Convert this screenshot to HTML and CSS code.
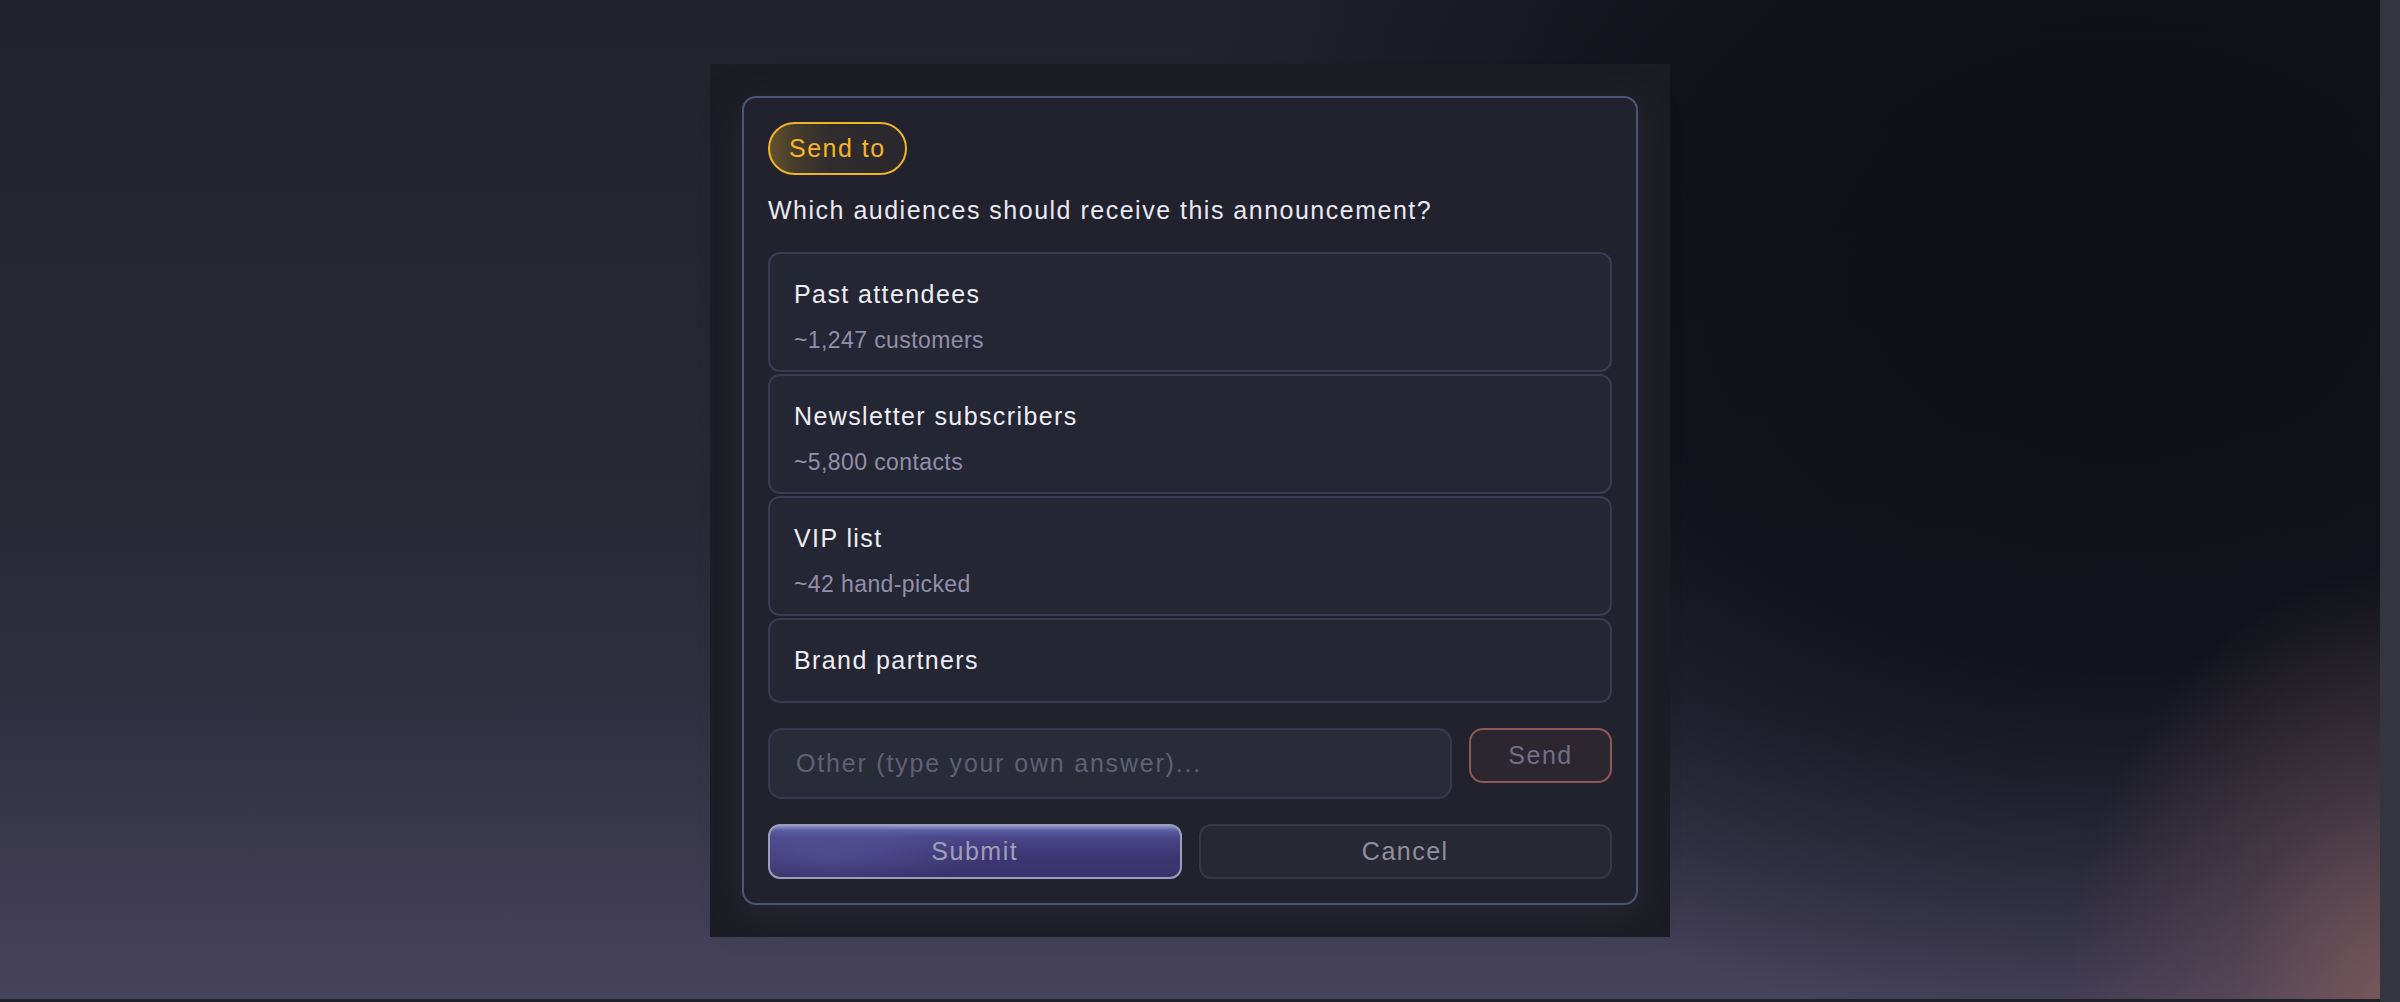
FILE: index.html
```html
<!DOCTYPE html>
<html lang="en">
<head>
<meta charset="utf-8">
<title>Send to</title>
<link rel="stylesheet" href="styles.css">
</head>
<body>
<div class="screen">
  <div class="stage">
    <main class="canvas">
      <section class="panel">
        <div class="card">
          <span class="badge">Send to</span>
          <p class="question">Which audiences should receive this announcement?</p>
          <ul class="options">
            <li class="option"><span class="opt-title">Past attendees</span><span class="opt-sub">~1,247 customers</span></li>
            <li class="option"><span class="opt-title">Newsletter subscribers</span><span class="opt-sub">~5,800 contacts</span></li>
            <li class="option"><span class="opt-title">VIP list</span><span class="opt-sub">~42 hand-picked</span></li>
            <li class="option"><span class="opt-title">Brand partners</span></li>
          </ul>
          <div class="other-row">
            <input class="other-input" type="text" placeholder="Other (type your own answer)...">
            <button class="send-btn" type="button">Send</button>
          </div>
          <div class="actions">
            <button class="btn btn-submit" type="button">Submit</button>
            <button class="btn btn-cancel" type="button">Cancel</button>
          </div>
        </div>
      </section>
    </main>
    <div class="hbar"></div>
  </div>
  <div class="vbar"></div>
</div>
</body>
</html>
```
FILE: styles.css
```css
html, body {
  margin: 0;
  padding: 0;
  height: 100%;
}

body {
  font-family: "Liberation Sans", Arial, sans-serif;
  background: #34363f;
  overflow: hidden;
}

.screen {
  display: flex;
  width: 2400px;
  height: 1002px;
}

.stage {
  flex: 1;
  display: flex;
  flex-direction: column;
  min-width: 0;
}

.canvas {
  flex: 1;
  display: flex;
  justify-content: center;
  align-items: flex-start;
  padding-top: 64px;
  box-sizing: border-box;
  background:
    radial-gradient(ellipse 330px 440px at 2395px 1010px, rgba(130, 92, 90, 0.85) 0%, rgba(110, 80, 86, 0.4) 50%, rgba(110, 80, 86, 0) 100%),
    radial-gradient(ellipse 980px 760px at 2120px 280px, rgba(13, 15, 23, 0.96) 0%, rgba(13, 15, 23, 0.86) 50%, rgba(13, 15, 23, 0) 100%),
    linear-gradient(180deg, #21242d 0%, #272935 50%, #2f2f40 70%, #48435d 100%);
}

.hbar {
  height: 3px;
  background: #1f2028;
}

.vbar {
  width: 20px;
  background: #34363f;
}

.panel {
  width: 960px;
  box-sizing: border-box;
  padding: 32px;
  background: #1c1c24;
}

.card {
  box-sizing: border-box;
  border: 2px solid #4a5677;
  border-radius: 14px;
  background: #21222e;
  padding: 24px;
  display: flex;
  flex-direction: column;
  box-shadow: 0 10px 36px rgba(48, 48, 64, 0.6);
}

.badge {
  align-self: flex-start;
  border: 2px solid #f0b429;
  border-radius: 999px;
  padding: 0 19px;
  height: 49px;
  line-height: 49px;
  font-size: 25px;
  letter-spacing: 1.5px;
  color: #f2b52c;
  background: linear-gradient(90deg, rgba(240, 180, 41, 0.32) 0%, rgba(240, 180, 41, 0.18) 18%, rgba(240, 180, 41, 0.07) 45%, rgba(240, 180, 41, 0.04) 100%);
  margin-bottom: 17px;
}

.question {
  margin: 0 0 22px;
  font-size: 25px;
  letter-spacing: 1.5px;
  line-height: 37.5px;
  color: #e9e9f1;
}

.options {
  list-style: none;
  margin: 0;
  padding: 0;
  display: flex;
  flex-direction: column;
  gap: 2px;
}

.option {
  border: 2px solid #3a3b52;
  border-radius: 12px;
  background: #252633;
  padding: 18px 24px;
  display: flex;
  flex-direction: column;
}

.opt-title {
  font-size: 25px;
  letter-spacing: 1.4px;
  line-height: 45px;
  color: #ededf5;
}

.opt-sub {
  font-size: 23px;
  letter-spacing: 0.4px;
  line-height: 24px;
  margin-top: 11px;
  color: #928fac;
}

.other-row {
  display: flex;
  align-items: flex-start;
  gap: 17px;
  margin-top: 25px;
}

.other-input {
  flex: 1;
  min-width: 0;
  height: 71px;
  box-sizing: border-box;
  border: 2px solid #363850;
  border-radius: 14px;
  background: #2a2b39;
  padding: 0 26px;
  font-family: "Liberation Sans", Arial, sans-serif;
  font-size: 25px;
  letter-spacing: 1.8px;
  color: #e0e0ea;
  outline: none;
}

.other-input::placeholder {
  color: #5f6074;
  opacity: 1;
}

.send-btn {
  width: 143px;
  height: 55px;
  box-sizing: border-box;
  border: 2px solid #8c5a53;
  border-radius: 14px;
  background: #2c2630;
  color: #6f6f86;
  font-family: "Liberation Sans", Arial, sans-serif;
  font-size: 25px;
  letter-spacing: 1.5px;
  padding: 0;
}

.actions {
  display: flex;
  gap: 17px;
  margin-top: 25px;
}

.btn {
  flex: 1;
  height: 55px;
  box-sizing: border-box;
  border-radius: 12px;
  font-family: "Liberation Sans", Arial, sans-serif;
  font-size: 25px;
  letter-spacing: 1.5px;
  padding: 0;
}

.btn-submit {
  border: 2px solid #9f9cba;
  color: #a19eb8;
  background:
    radial-gradient(ellipse 160px 30px at 60px 28px, rgba(120, 115, 190, 0.35), rgba(120, 115, 190, 0) 100%),
    linear-gradient(180deg, #8795d2 0%, #5d5fa6 8%, #4b4689 22%, #3d3775 55%, #38326c 100%);
}

.btn-cancel {
  border: 2px solid #363848;
  background: #272834;
  color: #8e8f9f;
}
```
